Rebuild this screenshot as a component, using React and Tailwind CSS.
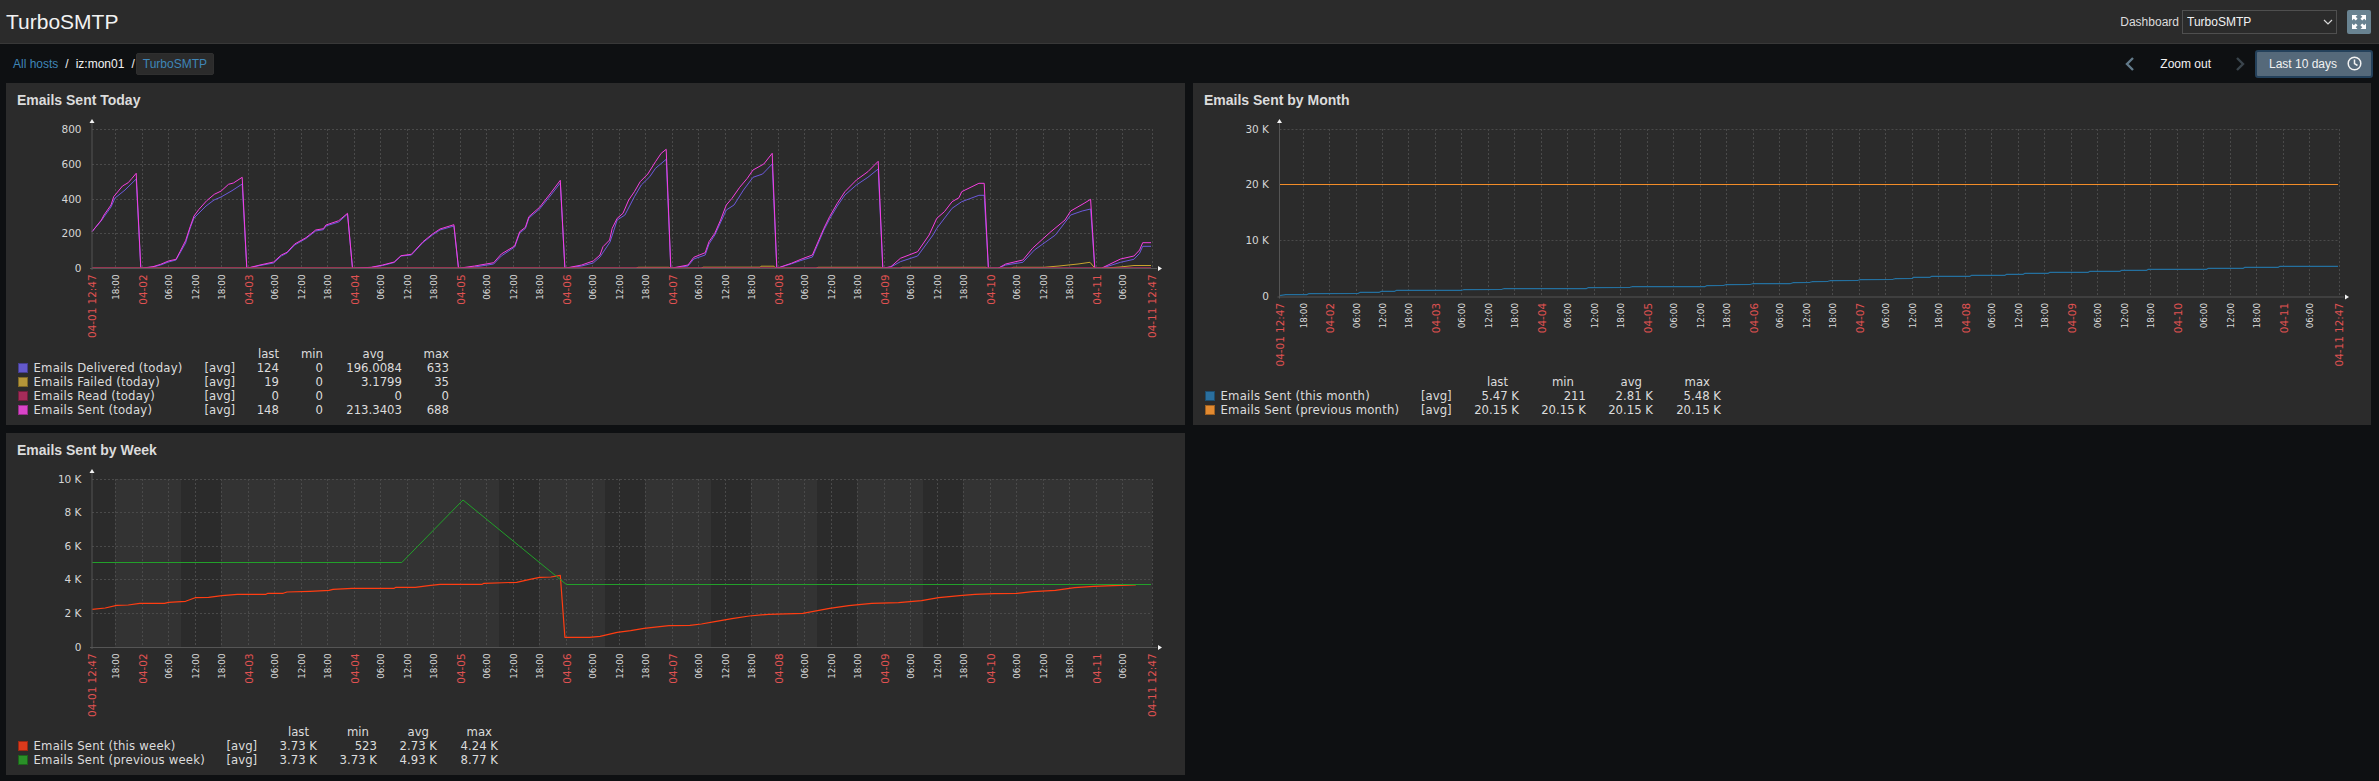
const GRID = "#4a4a4a";
const AXIS = "#555555";

const dayCurves = {
  sent: "92,231.7 101.4,220 104,215 111,205 113.7,196.7 122.5,186 128.2,182.7 132,178.3 136.2,173.3 140.8,268.3 153,266.7 160.7,264.3 168.4,261 176,259.3 180,251.7 185.6,240.7 190.2,226.7 194,216 199,209.3 206.7,200.7 214.3,194.3 221.2,191 228.5,184.3 233.4,183 242.2,177.3 246.8,268.3 260,265 273.6,262 281.3,255 287,252.3 294.7,244 306,237.7 315.7,230 323.4,228.7 326,225 338.7,220.7 347.5,213.3 352.5,268.3 371.2,267.3 382.7,265 394.2,262 401,255.7 411.4,254.3 423,241.7 432.5,234 440,229 453.9,224.7 458.5,268.3 474.6,266 493.7,262.7 501.3,254 514.7,246 519.7,231.7 525.4,227.3 528.9,216.7 539.6,207.3 551,192.7 560.3,180.3 564.9,268.3 581.7,265 593.2,261 600,255 603,246.7 609.6,240 612.2,228.3 617.2,218.3 623,213.3 628.7,200 634.4,191.7 640.2,181.7 647.8,174 655.5,161.7 661.2,153.3 666.2,149.3 670.8,268.3 688,265 693.8,257.3 705.2,252.7 709,241.7 714.8,233.3 720.6,220 726.3,205 732,198.3 739.7,187.3 747.3,178.3 753,170 763.8,164 772.2,153.3 776.8,268.3 791.4,263.3 800.9,259.3 812.4,255 823.9,228.3 829.6,216.7 837.3,203.3 844.9,191.7 856.4,180 867.9,171.7 878.2,161.3 882.8,268.3 890.9,266.7 900.4,258.3 917.6,251.7 929.1,235 936.8,218.3 944.4,211.7 952.1,201.7 959,197.7 961.7,191.7 978.9,183.3 984.2,183.3 988.4,268.3 998,268.3 1005.7,264 1022.9,260 1032.5,248.3 1049.7,232.7 1065,220 1070.7,211 1084.1,203.3 1090.6,199.3 1094.8,268.3 1101.3,268.3 1120.5,259 1133.9,256 1139.6,250 1142.7,242.7 1151,242.7",
  delivered: "92,231.7 101,221 111,207 115,198 125,190 136.2,179 140.8,268.3 153,267 160.7,265 168.4,262 176,260 180,253 185.6,243 190.2,228 194,218 200,212 206,206 214,200 221,197 232,190.7 242.2,184 246.8,268.3 260,265.5 273.6,263 281.3,256 287,253 294.7,245 306,238.5 315.7,231 323.4,229.7 326,226 338.7,222 347.5,214 352.5,268.3 371.2,267.5 382.7,265.5 394.2,262.5 401,256 411.4,255 423,242.5 432.5,235 440,230 453.9,226 458.5,268.3 474.6,267 493.7,264 501.3,256 514.7,247 519.7,233 525.4,228.5 528.9,218 539.6,209 551,195 560.3,183 564.9,268.3 581.7,266 593.2,263 600,257 610,242 617.2,220 624.9,215 634.4,196.7 641.3,185 649.8,176.7 655.5,168.3 666.2,159.3 670.8,268.3 688,266 693.8,259 705.2,255 709,244 714.8,235 726.3,210 734,205 743.5,190 753,177.3 762.6,174 772.2,164 776.8,268.3 791.4,263.8 800.9,260.5 812.4,257 823.9,230 829.6,219 837.3,206 844.9,195 856.4,185 867.9,177.3 878.2,169 882.8,268.3 890.9,267 900.4,261.7 917.6,256 933,235 936.8,228.3 952.1,208.3 961.7,201.7 978.9,195.3 984.2,195.3 988.4,268.3 998,268.3 1005.7,265 1022.9,262.3 1034.4,250 1055.4,235 1070.7,215 1082.2,211 1090.6,209 1094.8,268.3 1101.3,268.3 1120.5,262.3 1133.9,259.3 1139.6,253.3 1142.7,246.3 1151,246.3",
  failed: "92,268.3 636,268.3 638,267.3 669,267.3 671,268.3 701,268.3 703,267.2 760,267.2 761,266.2 774,266.2 776,268.3 816,268.3 818,267.3 881,267.3 883,268.3 900,268.3 902,267.3 986,267.3 988,268.3 1011,268.3 1013,267.3 1044,267.3 1059,266 1078,264 1090,262.3 1095,268.3 1101,268.3 1120,267 1134,265.5 1151,265.5",
};

const monthThis = "1279.6,295.7 1285.7,294.7 1306.7,294.7 1308.6,293.7 1358.4,293.3 1360.3,292.3 1379.4,292.3 1381.4,291.3 1394.7,291.3 1396.7,290.3 1461.7,290.3 1463.6,289.7 1501.9,289.3 1503.8,288.7 1586.1,288.7 1588,287.7 1630,287.3 1632,286.7 1704.7,286.7 1706.6,285.7 1723.9,285.3 1725.8,284.7 1750.7,284.3 1752.6,283.7 1790,283.7 1793,282.7 1810,282.3 1812,281.7 1828,281.3 1830,280.7 1858,280.3 1860,279.7 1893,279.3 1895,278.7 1912.7,278.3 1913.3,277.3 1930,277.3 1931.7,276.3 1970,276.3 1971.7,275.3 2005,275.3 2006.7,274.3 2023.3,274.3 2025,273.3 2048.3,273.3 2050,272.3 2088.3,272.3 2090,271.3 2120,271.3 2121.7,270.3 2146.7,270.3 2148.3,269.3 2206.7,269.3 2208.3,268.3 2243.3,268.3 2245,267.3 2278.3,267.3 2280,266.3 2338,266.3";

const weekThis = "92.2,609.3 105.2,608 116.7,605.3 128.2,605 139.7,603.3 164.6,603.3 168.4,602.3 185.6,601.3 195.2,597.7 208.6,597.3 222,595.7 237.3,594.3 266,594.3 267.9,593.3 283.2,593.3 287,592 310,591.3 329.1,590.3 333,589.3 352,588.3 394.2,588.3 396,587.3 415.2,587.3 428.6,585.7 440,584.3 482.2,584.3 484,583.3 516.6,582.3 530,579.3 539.6,577.3 551,577 560.3,575.3 564.9,637.3 589.4,637.3 600,636.3 617.2,632.3 630.6,630.7 644,628.3 668.9,625.7 689.9,625.3 701.4,624 714.8,621.7 732,618.7 749.3,616 768.4,614.3 802.8,613.3 829.6,608.3 848.8,605.7 871.7,603.3 898.5,602.7 921.5,600.7 938.7,597.7 959.7,595.7 975,594.3 994.2,593.7 1017.1,593.3 1032.5,591.7 1055.4,590.3 1074.6,587.7 1093.7,586.3 1112.8,585.7 1135.8,585";
const weekPrev = "92.2,562.5 401.8,562.5 463,500 566.4,584.5 1151,584.5";

// light bands of the week graph (non working hours)
const weekBands = [[115, 181], [221, 499], [539, 605], [645, 711], [751, 817], [857, 923], [963, 1152]];

// tick list: offset in hours from 04-01 12:47
function buildTicks() {
  const ticks = [];
  let hours = 5 + 13 / 60;
  let day = 2;
  const names = ["18:00", "day", "06:00", "12:00"];
  let i = 0;
  while (hours < 235) {
    const name = names[i % 4];
    if (name === "day") {
      ticks.push({ h: hours, label: "04-" + String(day).padStart(2, "0"), red: true });
      day += 1;
    } else {
      ticks.push({ h: hours, label: name, red: false });
    }
    hours += 6;
    i += 1;
  }
  return ticks;
}
const ticks = buildTicks();

function Graph({ x0, x1, top, zero, yLabels, vbY, vbX, width, height, bands, children }) {
  const pxPerHour = (x1 - x0) / 240;
  return (
    <svg
      width={width}
      height={height}
      viewBox={`${vbX} ${vbY} ${width} ${height}`}
      className="block font-['DejaVu_Sans',sans-serif]"
    >
      {bands &&
        bands.map(([a, b]) => (
          <rect key={a} x={a} y={top} width={b - a} height={zero - top} fill="#333333" />
        ))}
      <line x1={x0} x2={x1} y1={top + 0.5} y2={top + 0.5} stroke={GRID} strokeDasharray="2 2" />
      {yLabels.map((l) => (
        <g key={l.text}>
          {l.y !== zero && l.y !== top + 0.5 && (
            <line x1={x0} x2={x1} y1={l.y} y2={l.y} stroke={GRID} strokeDasharray="2 2" />
          )}
          <text x={x0 - 10.5} y={l.y + 3.5} textAnchor="end" fontSize="10.5" fill="#d6d6d6">
            {l.text}
          </text>
        </g>
      ))}
      {ticks.map((t) => {
        const x = Math.round(x0 + t.h * pxPerHour) + 0.5;
        return (
          <g key={t.h}>
            <line x1={x} x2={x} y1={top} y2={zero} stroke={GRID} strokeDasharray="2 2" />
            <text
              transform={`translate(${x + (t.red ? 4 : 3.5)} ${zero + 6.5}) rotate(-90)`}
              textAnchor="end"
              fontSize={t.red ? 10.4 : 8.8}
              fill={t.red ? "#e05252" : "#dcdcdc"}
            >
              {t.label}
            </text>
          </g>
        );
      })}
      <line x1={x1 + 0.5} x2={x1 + 0.5} y1={top} y2={zero} stroke={GRID} strokeDasharray="2 2" />
      <text
        transform={`translate(${x0 + 4} ${zero + 6.5}) rotate(-90)`}
        textAnchor="end"
        fontSize="10.4"
        fill="#e05252"
      >
        04-01 12:47
      </text>
      <text
        transform={`translate(${x1 + 4} ${zero + 6.5}) rotate(-90)`}
        textAnchor="end"
        fontSize="10.4"
        fill="#e05252"
      >
        04-11 12:47
      </text>
      {children}
      <line x1={x0} x2={x0} y1={top - 7} y2={zero + 2} stroke={AXIS} />
      <line x1={x0 - 2} x2={x1 + 5} y1={zero + 0.5} y2={zero + 0.5} stroke={AXIS} />
      <polygon points={`${x0},${top - 10} ${x0 + 2.5},${top - 6} ${x0 - 2.5},${top - 6}`} fill="#f2f2f2" />
      <polygon points={`${x1 + 10},${zero + 0.5} ${x1 + 6},${zero - 2} ${x1 + 6},${zero + 3}`} fill="#f2f2f2" />
    </svg>
  );
}

function Line({ points, color, width = 1 }) {
  return <polyline points={points} fill="none" stroke={color} strokeWidth={width} strokeLinejoin="round" />;
}

function Legend({ columns, headers, rows }) {
  return (
    <div className={`grid ${columns} font-['DejaVu_Sans',sans-serif] text-[11.7px] leading-[14px] text-[#dcdcdc] whitespace-nowrap`}>
      <span />
      <span />
      <span />
      {headers.map((h) => (
        <span key={h.text} className={h.className}>
          {h.text}
        </span>
      ))}
      {rows.map((r) => (
        <div key={r.name} className="contents">
          <span className="flex items-center">
            <i className={`block w-2.5 h-2.5 border border-black/30 ${r.swatch}`} />
          </span>
          <span className="tracking-[0.2px]">{r.name}</span>
          <span>[avg]</span>
          {r.values.map((v, i) => (
            <span key={i} className="text-right">
              {v}
            </span>
          ))}
        </div>
      ))}
    </div>
  );
}

function Panel({ title, children }) {
  return (
    <section className="h-[342px] bg-[#2b2b2b] overflow-hidden">
      <h4 className="h-[25px] pl-[11px] pt-2 font-['Liberation_Sans',sans-serif] text-[14px] leading-[18px] font-bold text-[#dcdcdc]">
        {title}
      </h4>
      {children}
    </section>
  );
}

function ExpandIcon() {
  return (
    <svg width="16" height="16" viewBox="0 0 16 16" fill="#ffffff">
      <path d="M1 1h5.5L4.7 2.8 6.6 4.7 4.7 6.6 2.8 4.7 1 6.5z" />
      <path d="M15 1v5.5l-1.8-1.8-1.9 1.9-1.9-1.9 1.9-1.9L9.5 1z" />
      <path d="M1 15V9.5l1.8 1.8 1.9-1.9 1.9 1.9-1.9 1.9L6.5 15z" />
      <path d="M15 15H9.5l1.8-1.8-1.9-1.9 1.9-1.9 1.9 1.9L15 9.5z" />
    </svg>
  );
}

export default function App() {
  return (
    <div className="w-[2379px] h-[781px] overflow-hidden bg-[#0e1012] font-['Liberation_Sans',Arial,sans-serif] text-[12px] text-[#f2f2f2]">
      <header className="h-[44px] flex items-center justify-between bg-[#2b2b2b] border-b border-[#383838] pl-[6px] pr-[8px]">
        <h1 className="text-[21px] leading-[25px] text-[#f2f2f2]">TurboSMTP</h1>
        <div className="flex items-center">
          <label className="mr-[3px] text-[#dcdcdc]">Dashboard</label>
          <div className="relative mr-[10px]">
            <select className="appearance-none w-[155px] h-[24px] pl-[4px] bg-[#2b2b2b] border border-[#4f4f4f] text-[#f2f2f2] text-[12px] outline-none">
              <option>TurboSMTP</option>
            </select>
            <svg className="absolute right-[4px] top-[7px] pointer-events-none" width="10" height="10" viewBox="0 0 10 10" fill="none" stroke="#d8d8d8" strokeWidth="1.2">
              <path d="M1 3l4 4 4-4" />
            </svg>
          </div>
          <button className="w-[24px] h-[24px] flex items-center justify-center rounded-[2px] bg-[#698391]">
            <ExpandIcon />
          </button>
        </div>
      </header>

      <div className="h-[39px] flex items-center justify-between pl-[13px] pr-[6px]">
        <nav className="flex items-center">
          <a className="text-[#3f86b8]">All hosts</a>
          <span className="mx-[7px] text-[#f2f2f2]">/</span>
          <span className="text-[#f2f2f2]">iz:mon01</span>
          <span className="ml-[7px] mr-[1px] text-[#f2f2f2]">/</span>
          <a className="h-[22px] px-[6px] leading-[20px] rounded-[2px] bg-[#2b2b2b] text-[#3f86b8] border border-[#2f2f2f]">TurboSMTP</a>
        </nav>
        <div className="flex items-center">
          <svg width="12" height="16" viewBox="0 0 12 16" fill="none" stroke="#627a8a" strokeWidth="2.4" className="mr-[24px]">
            <path d="M9 2L3 8l6 6" />
          </svg>
          <span className="text-[#f2f2f2]">Zoom out</span>
          <svg width="12" height="16" viewBox="0 0 12 16" fill="none" stroke="#3a444c" strokeWidth="2.4" className="ml-[23px] mr-[9px]">
            <path d="M3 2l6 6-6 6" />
          </svg>
          <button className="w-[118px] h-[28px] pl-[12px] flex items-center gap-[10px] rounded-[3px] bg-[#55697a] border-2 border-[#24415b] text-[#f2f2f2]">
            Last 10 days
            <svg width="15" height="15" viewBox="0 0 15 15" fill="none" stroke="#f2f2f2" strokeWidth="1.5">
              <circle cx="7.5" cy="7.5" r="6.3" />
              <path d="M7.5 3.5v4.2l3 1.8" />
            </svg>
          </button>
        </div>
      </div>

      <main className="grid grid-cols-[1179px_1178px] gap-2 pl-[6px]">
        <Panel title="Emails Sent Today">
          <Graph
            x0={92} x1={1152} top={129} zero={268} vbX={6} vbY={108} width={1179} height={239}
            yLabels={[
              { text: "800", y: 129.5 },
              { text: "600", y: 164.5 },
              { text: "400", y: 199.5 },
              { text: "200", y: 233.5 },
              { text: "0", y: 268 },
            ]}
          >
            <Line points={dayCurves.delivered} color="#6c59dc" />
            <Line points={dayCurves.failed} color="#c9a32e" />
            <Line points={dayCurves.sent} color="#f53fe0" />
            <line x1="92" x2="1151" y1="268" y2="268" stroke="#b0305f" strokeWidth="1.4" />
          </Graph>
          <Legend
            columns="grid-cols-[16px_171px_45px_29.5px_44px_79px_47px] pl-[11.5px]"
            headers={[
              { text: "last", className: "text-right" },
              { text: "min", className: "text-right" },
              { text: "avg", className: "text-right pr-[18px]" },
              { text: "max", className: "text-right" },
            ]}
            rows={[
              { name: "Emails Delivered (today)", swatch: "bg-[#6359cc]", values: ["124", "0", "196.0084", "633"] },
              { name: "Emails Failed (today)", swatch: "bg-[#b59639]", values: ["19", "0", "3.1799", "35"] },
              { name: "Emails Read (today)", swatch: "bg-[#a52c5a]", values: ["0", "0", "0", "0"] },
              { name: "Emails Sent (today)", swatch: "bg-[#d944c8]", values: ["148", "0", "213.3403", "688"] },
            ]}
          />
        </Panel>

        <Panel title="Emails Sent by Month">
          <Graph
            x0={1279.5} x1={2339} top={129} zero={296.5} vbX={1193} vbY={108} width={1178} height={267}
            yLabels={[
              { text: "30 K", y: 129.5 },
              { text: "20 K", y: 184.5 },
              { text: "10 K", y: 240.5 },
              { text: "0", y: 296.5 },
            ]}
          >
            <Line points="1279.5,184.5 2338,184.5" color="#f28c28" />
            <Line points={monthThis} color="#24709f" width={1.2} />
          </Graph>
          <Legend
            columns="grid-cols-[16px_200.5px_45px_53px_67px_67px_68px] pl-[11.5px]"
            headers={[
              { text: "last", className: "text-right pr-[11px]" },
              { text: "min", className: "text-right pr-[12px]" },
              { text: "avg", className: "text-right pr-[11px]" },
              { text: "max", className: "text-right pr-[11px]" },
            ]}
            rows={[
              { name: "Emails Sent (this month)", swatch: "bg-[#2a6f9e]", values: ["5.47 K", "211", "2.81 K", "5.48 K"] },
              { name: "Emails Sent (previous month)", swatch: "bg-[#e28a30]", values: ["20.15 K", "20.15 K", "20.15 K", "20.15 K"] },
            ]}
          />
        </Panel>

        <Panel title="Emails Sent by Week">
          <Graph
            x0={92} x1={1152} top={479} zero={647} vbX={6} vbY={458} width={1179} height={267}
            bands={weekBands}
            yLabels={[
              { text: "10 K", y: 479.5 },
              { text: "8 K", y: 512.5 },
              { text: "6 K", y: 546.5 },
              { text: "4 K", y: 579.5 },
              { text: "2 K", y: 613.5 },
              { text: "0", y: 647 },
            ]}
          >
            <Line points={weekThis} color="#ff3d12" width={1.2} />
            <Line points={weekPrev} color="#22a02a" />
          </Graph>
          <Legend
            columns="grid-cols-[16px_193px_45px_45.5px_60px_60px_61px] pl-[11.5px]"
            headers={[
              { text: "last", className: "text-right pr-[8px]" },
              { text: "min", className: "text-right pr-[8px]" },
              { text: "avg", className: "text-right pr-[8px]" },
              { text: "max", className: "text-right pr-[6px]" },
            ]}
            rows={[
              { name: "Emails Sent (this week)", swatch: "bg-[#dc3a1c]", values: ["3.73 K", "523", "2.73 K", "4.24 K"] },
              { name: "Emails Sent (previous week)", swatch: "bg-[#2a9028]", values: ["3.73 K", "3.73 K", "4.93 K", "8.77 K"] },
            ]}
          />
        </Panel>
      </main>
    </div>
  );
}
